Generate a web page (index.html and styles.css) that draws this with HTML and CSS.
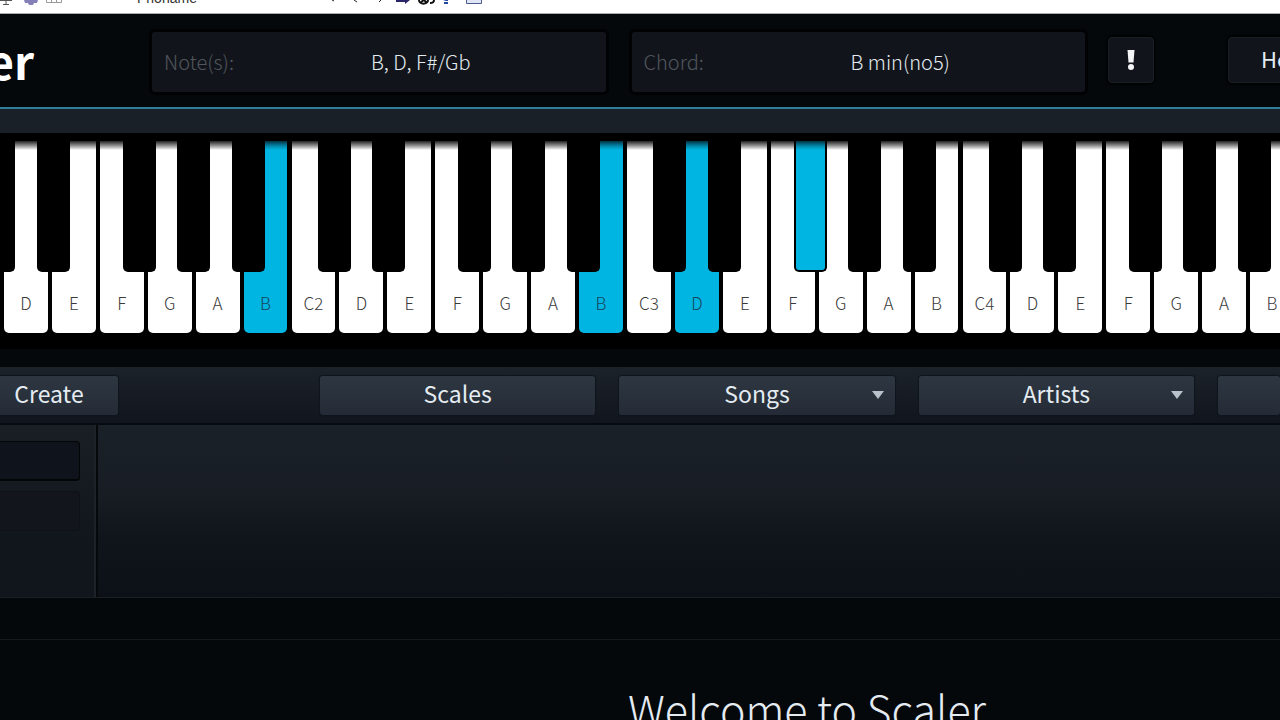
FILE: index.html
```html
<!DOCTYPE html>
<html lang="en">
<head>
  <meta charset="UTF-8" />
  <meta name="viewport" content="width=device-width, initial-scale=1.0"/>
  <title>Scaler</title>
  <link rel="stylesheet" href="styles.css">
</head>
<body>
  <!-- Host toolbar -->
  <div class="host-bar">
    <svg class="host-icons" width="64" height="6" viewBox="0 0 64 6" aria-hidden="true">
      <path d="M0 0.5H12M6 0V4M3 4.500H9" stroke="#555" fill="none"/>
      <path d="M24 0H38L37 3L34 3L33 5H29L28 3L25 3Z" fill="#8580b8"/>
      <path d="M46.500 0V2.500H61.500V0M51.500 0V2M56.500 0V2" stroke="#999" fill="none"/>
    </svg>
    <span class="host-name">Phoname</span>
    <svg class="host-icons" width="154" height="6" viewBox="0 0 154 6" aria-hidden="true">
      <path d="M1 0L3 1M23 0L26 2M50 0L48 2" stroke="#222" fill="none"/>
      <path d="M65 0H79L74 4V2H65Z" fill="#2a2468"/>
      <path d="M88 0C88 5 97 5 97 0M90 2L93 0L96 3M99 3C103 3 103 1 103 0" stroke="#111" stroke-width="2" fill="none"/>
      <path d="M112 0H117V1H115ZM113 2H117V4H113Z" fill="#234a9c"/>
      <path d="M135.500 0V3.500H150.500V0" stroke="#4a5a90" fill="#dfe5f5"/>
    </svg>
  </div>

  <header>
    <div class="brand"><span>Scaler</span></div>
    <div class="readout">
      <span class="readout-label">Note(s):</span>
      <output>B, D, F#/Gb</output>
    </div>
    <div class="readout">
      <span class="readout-label">Chord:</span>
      <output>B min(no5)</output>
    </div>
    <button class="dark-button panic" aria-label="Panic">
      <svg width="10" height="20" viewBox="0 0 10 20" aria-hidden="true">
        <path d="M1.500 0H8.500L7.500 12.500H2.500Z" fill="#f2f4f6"/>
        <circle cx="5" cy="17" r="3" fill="#f2f4f6"/>
      </svg>
    </button>
    <button class="dark-button help">Help</button>
  </header>

  <div class="spacer-bar"></div>

  <!-- Keyboard -->
  <div class="keyboard">
    <div class="octave">
      <div class="slot c"><button class="white" aria-label="C1"></button><button class="black" aria-label="C#1"></button></div>
      <div class="slot d"><button class="white">D</button><button class="black" aria-label="D#1"></button></div>
      <div class="slot e"><button class="white">E</button></div>
      <div class="slot f"><button class="white">F</button><button class="black" aria-label="F#1"></button></div>
      <div class="slot g"><button class="white">G</button><button class="black" aria-label="G#1"></button></div>
      <div class="slot a"><button class="white">A</button><button class="black" aria-label="A#1"></button></div>
      <div class="slot b"><button class="white on">B</button></div>
    </div>
    <div class="octave">
      <div class="slot c"><button class="white">C2</button><button class="black" aria-label="C#2"></button></div>
      <div class="slot d"><button class="white">D</button><button class="black" aria-label="D#2"></button></div>
      <div class="slot e"><button class="white">E</button></div>
      <div class="slot f"><button class="white">F</button><button class="black" aria-label="F#2"></button></div>
      <div class="slot g"><button class="white">G</button><button class="black" aria-label="G#2"></button></div>
      <div class="slot a"><button class="white">A</button><button class="black" aria-label="A#2"></button></div>
      <div class="slot b"><button class="white on">B</button></div>
    </div>
    <div class="octave">
      <div class="slot c"><button class="white">C3</button><button class="black" aria-label="C#3"></button></div>
      <div class="slot d"><button class="white on">D</button><button class="black" aria-label="D#3"></button></div>
      <div class="slot e"><button class="white">E</button></div>
      <div class="slot f"><button class="white">F</button><button class="black on" aria-label="F#3"></button></div>
      <div class="slot g"><button class="white">G</button><button class="black" aria-label="G#3"></button></div>
      <div class="slot a"><button class="white">A</button><button class="black" aria-label="A#3"></button></div>
      <div class="slot b"><button class="white">B</button></div>
    </div>
    <div class="octave">
      <div class="slot c"><button class="white">C4</button><button class="black" aria-label="C#4"></button></div>
      <div class="slot d"><button class="white">D</button><button class="black" aria-label="D#4"></button></div>
      <div class="slot e"><button class="white">E</button></div>
      <div class="slot f"><button class="white">F</button><button class="black" aria-label="F#4"></button></div>
      <div class="slot g"><button class="white">G</button><button class="black" aria-label="G#4"></button></div>
      <div class="slot a"><button class="white">A</button><button class="black" aria-label="A#4"></button></div>
      <div class="slot b"><button class="white">B</button></div>
    </div>
  </div>

  <!-- Browser tabs -->
  <nav>
    <button class="tab create">Create</button>
    <button class="tab">Scales</button>
    <button class="tab menu">Songs</button>
    <button class="tab menu">Artists</button>
    <button class="tab last" aria-label="More"></button>
  </nav>

  <main>
    <aside>
      <button class="filter active" aria-label="Filter 1"></button>
      <button class="filter" aria-label="Filter 2"></button>
    </aside>
    <section class="results"></section>
  </main>

  <div class="divider-bar"></div>

  <section class="welcome">
    <h1>Welcome to Scaler</h1>
  </section>
</body>
</html>
```

FILE: styles.css
```css
:root {
  --bg: #04080b;
  --panel: #11151b;
  --accent: #00b5e2;
  --line: #2f7f9b;
  --text: #e4ebf1;
}

* {
  margin: 0;
  padding: 0;
  box-sizing: border-box;
}

body {
  background: var(--bg);
  color: var(--text);
  font-family: "Noto Sans CJK SC", "Noto Sans", sans-serif;
  height: 100vh;
  overflow: hidden;
}

button {
  font: inherit;
  color: inherit;
  border: none;
  cursor: pointer;
}

/* Host toolbar */
.host-bar {
  height: 14px;
  background: #fff;
  border-bottom: 1px solid #a9adaf;
  display: flex;
  align-items: flex-start;
  overflow: hidden;
}

.host-icons {
  flex: none;
}

.host-name {
  width: 120px;
  margin: -11px 74px 0 73px;
  color: #333;
  font: 14px/18px "Liberation Sans", sans-serif;
}

/* Header */
header {
  height: 93px;
  display: flex;
  align-items: flex-start;
  gap: 20px;
  padding-top: 15px;
  overflow: hidden;
}

.brand {
  flex: 0 0 34px;
  min-width: 0;
  height: 66px;
  margin-right: 95px;
  display: flex;
  justify-content: flex-end;
  color: #fff;
  font: 600 46px/62px "Noto Sans CJK SC", sans-serif;
}

.readout {
  flex: 1 1 0;
  height: 66px;
  padding: 0 12px;
  display: grid;
  grid-template-columns: 84px 1fr;
  align-items: center;
  background: var(--panel);
  border: 3px solid #010204;
  border-radius: 6px;
  font-size: 20px;
  line-height: 30px;
  font-weight: 300;
}

.readout-label {
  color: #51565d;
}

.readout output {
  text-align: center;
}

.dark-button {
  height: 46px;
  margin-top: 8px;
  background: var(--panel);
  border: 1px solid #1b1f25;
  border-radius: 4px;
  box-shadow: 0 0 2px 1px #000;
}

.panic {
  flex: 0 0 46px;
  display: flex;
  align-items: center;
  justify-content: center;
}

.help {
  flex: 0 0 114px;
  margin: 8px -62px 0 54px;
  padding-bottom: 4px;
  font-size: 22px;
}

.spacer-bar {
  height: 26px;
  background: #1a2027;
  border-top: 2px solid var(--line);
}

/* Keyboard */
.keyboard {
  height: 216px;
  padding: 8px 0 14px;
  margin: 0 -18px 18px -44px;
  background: #000;
  display: flex;
}

.octave {
  display: flex;
  flex: 1 1 0;
}

.slot {
  position: relative;
  flex: 1 1 0;
  height: 192px;
  padding-right: 4px;
}

.white {
  width: 100%;
  height: 192px;
  padding-top: 132px;
  display: block;
  color: #3a3a3a;
  background: linear-gradient(#222 0, #999 5px, #fff 9px);
  border-radius: 0 0 5px 5px;
  font-size: 17px;
  line-height: 24px;
  font-weight: 300;
}

.white.on {
  color: #17465c;
  background: linear-gradient(#023040 0, #0288aa 5px, var(--accent) 9px);
}

.black {
  position: absolute;
  z-index: 1;
  top: 0;
  width: 33px;
  height: 131px;
  background: #000;
  border: 2px solid #000;
  border-top: none;
  border-radius: 0 0 5px 5px;
}

.black.on {
  background: linear-gradient(#023040 0, #0288aa 5px, var(--accent) 9px);
}

.c .black { left: 26px; }
.d .black { left: 33px; }
.f .black { left: 23px; }
.g .black { left: 29px; }
.a .black { left: 36px; }

/* Browser tabs */
nav {
  height: 58px;
  padding-top: 8px;
  display: flex;
  gap: 24px;
  overflow: hidden;
  background: linear-gradient(#1c222a, #11151d);
  border-top: 1px solid #1d2227;
  border-bottom: 2px solid #070a0e;
}

.tab {
  flex: 1 1 0;
  height: 39px;
  position: relative;
  font-size: 23px;
  line-height: 34px;
  padding-bottom: 6px;
  background: linear-gradient(#2d3741, #252b36);
  border-radius: 3px;
  box-shadow: 0 0 1px 1px #10151c;
}

.create {
  flex: 0 0 138px;
  margin: 0 178px 0 -20px;
}

.last {
  flex: 0 0 62px;
}

.menu::after {
  content: "";
  position: absolute;
  right: 11px;
  top: 15px;
  border: 6px solid transparent;
  border-top: 8px solid #b9c1ca;
  border-bottom: none;
}

/* Content */
main {
  height: 173px;
  display: flex;
  border-bottom: 1px solid #1a1e25;
}

aside {
  flex: 0 0 98px;
  padding: 16px 16px 0 0;
  display: flex;
  flex-direction: column;
  gap: 10px;
  background: linear-gradient(#1a1f26, #11161d 70%);
  border-right: 2px solid #06090c;
  box-shadow: inset -2px 0 0 #1d2228;
}

.filter {
  height: 40px;
  background: #12161c;
  border: 1px solid #0e1217;
  border-left: none;
  border-radius: 0 4px 4px 0;
}

.filter.active {
  background: #0f131b;
  border-color: #030507;
  border-bottom-width: 2px;
}

.results {
  flex: 1;
  background: linear-gradient(#1b2128, #171d23 40%, #10151b 65%, #0c1118);
}

.divider-bar {
  height: 42px;
  border-bottom: 1px solid #14181c;
}

.welcome {
  padding: 40px 0 0 334px;
  text-align: center;
}

.welcome h1 {
  font-size: 43px;
  line-height: 56px;
  font-weight: 300;
}
```
